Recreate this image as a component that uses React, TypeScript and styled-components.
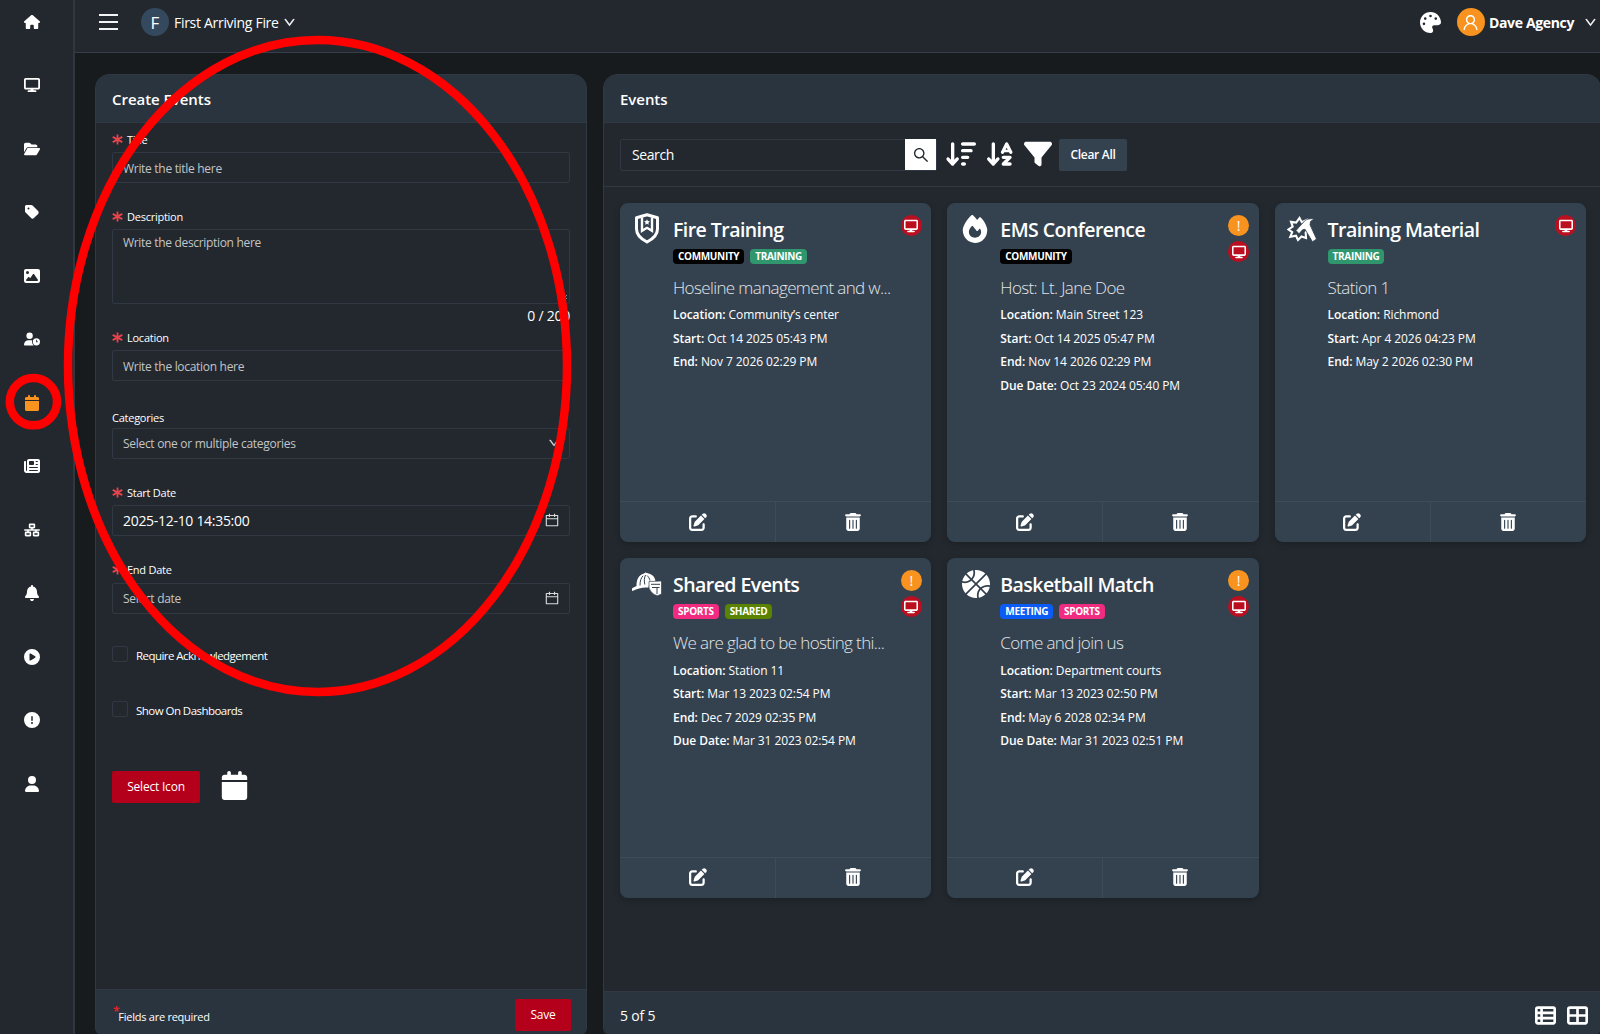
import type { ReactNode } from "react";
import styled, { createGlobalStyle } from "styled-components";
import {
  AiOutlineCalendar,
  AiOutlineDown,
  AiOutlineSearch,
  AiOutlineUser,
} from "react-icons/ai";
import {
  FaArrowDownAZ,
  FaArrowDownWideShort,
  FaBasketball,
  FaBell,
  FaCalendar,
  FaCircleExclamation,
  FaCirclePlay,
  FaDisplay,
  FaFilter,
  FaFire,
  FaFolderOpen,
  FaHouse,
  FaImage,
  FaNetworkWired,
  FaNewspaper,
  FaPalette,
  FaPenToSquare,
  FaTableCellsLarge,
  FaTableList,
  FaTag,
  FaTrashCan,
  FaUser,
  FaUserClock,
} from "react-icons/fa6";

const colors = {
  page: "#181b1e",
  surface: "#22282e",
  raised: "#2a343e",
  card: "#344250",
  border: "#303943",
  red: "#b4001a",
  orange: "#f7931e",
};

const tagColors: Record<string, string> = {
  COMMUNITY: "#000000",
  TRAINING: "#30966e",
  SPORTS: "#f02b80",
  SHARED: "#598300",
  MEETING: "#0a5cf5",
};

const BallIcon = styled(FaBasketball)`
  margin-left: 3px;
`;

type EventItem = {
  title: string;
  icon: ReactNode;
  tags: string[];
  description: string;
  details: [string, string][];
  acknowledge?: boolean;
};

const events: EventItem[] = [
  {
    title: "Fire Training",
    icon: <ShieldIcon />,
    tags: ["COMMUNITY", "TRAINING"],
    description: "Hoseline management and w...",
    details: [
      ["Location", "Community’s center"],
      ["Start", "Oct 14 2025 05:43 PM"],
      ["End", "Nov 7 2026 02:29 PM"],
    ],
  },
  {
    title: "EMS Conference",
    icon: <FaFire size={28} />,
    tags: ["COMMUNITY"],
    description: "Host: Lt. Jane Doe",
    details: [
      ["Location", "Main Street 123"],
      ["Start", "Oct 14 2025 05:47 PM"],
      ["End", "Nov 14 2026 02:29 PM"],
      ["Due Date", "Oct 23 2024 05:40 PM"],
    ],
    acknowledge: true,
  },
  {
    title: "Training Material",
    icon: <HammerIcon />,
    tags: ["TRAINING"],
    description: "Station 1",
    details: [
      ["Location", "Richmond"],
      ["Start", "Apr 4 2026 04:23 PM"],
      ["End", "May 2 2026 02:30 PM"],
    ],
  },
  {
    title: "Shared Events",
    icon: <HelmetIcon />,
    tags: ["SPORTS", "SHARED"],
    description: "We are glad to be hosting thi...",
    details: [
      ["Location", "Station 11"],
      ["Start", "Mar 13 2023 02:54 PM"],
      ["End", "Dec 7 2029 02:35 PM"],
      ["Due Date", "Mar 31 2023 02:54 PM"],
    ],
    acknowledge: true,
  },
  {
    title: "Basketball Match",
    icon: <BallIcon size={28} />,
    tags: ["MEETING", "SPORTS"],
    description: "Come and join us",
    details: [
      ["Location", "Department courts"],
      ["Start", "Mar 13 2023 02:50 PM"],
      ["End", "May 6 2028 02:34 PM"],
      ["Due Date", "Mar 31 2023 02:51 PM"],
    ],
    acknowledge: true,
  },
];

const navIcons = [
  FaHouse,
  FaDisplay,
  FaFolderOpen,
  FaTag,
  FaImage,
  FaUserClock,
  FaCalendar,
  FaNewspaper,
  FaNetworkWired,
  FaBell,
  FaCirclePlay,
  FaCircleExclamation,
  FaUser,
];

export default function App() {
  return (
    <>
      <GlobalStyle />
      <Page>
        <Sidebar>
          {navIcons.map((Icon, index) => (
            <NavItem key={index} $active={Icon === FaCalendar}>
              <Icon />
            </NavItem>
          ))}
        </Sidebar>
        <Main>
          <TopBar />
          <Content>
            <CreateEvents />
            <EventsPanel />
          </Content>
        </Main>
      </Page>
      <Markup />
    </>
  );
}

function TopBar() {
  return (
    <Header>
      <Hamburger>
        <i />
        <i />
        <i />
      </Hamburger>
      <Avatar $color="#34495e">F</Avatar>
      <AgencyName>First Arriving Fire</AgencyName>
      <Chevron size={13} />
      <Spacer />
      <FaPalette size={21} />
      <UserMenu>
        <Avatar $color={colors.orange}>
          <AiOutlineUser size={19} />
        </Avatar>
        <UserName>Dave Agency</UserName>
        <Chevron size={13} />
      </UserMenu>
    </Header>
  );
}

function CreateEvents() {
  return (
    <FormPanel>
      <PanelHeader>Create Events</PanelHeader>
      <Form>
        <Field label="Title" required>
          <Input>Write the title here</Input>
        </Field>
        <Field label="Description" required>
          <TextArea>
            Write the description here
            <ResizeHandle viewBox="0 0 8 8">
              <path d="M1 7 7 1M4 7 7 4" stroke="#8c9297" />
            </ResizeHandle>
          </TextArea>
          <Counter>0 / 200</Counter>
        </Field>
        <Field label="Location" required>
          <Input>Write the location here</Input>
        </Field>
        <Field label="Categories">
          <Input>
            Select one or multiple categories
            <Chevron size={12} />
          </Input>
        </Field>
        <Field label="Start Date" required>
          <Input $filled>
            2025-12-10 14:35:00
            <AiOutlineCalendar size={16} />
          </Input>
        </Field>
        <Field label="End Date" required>
          <Input>
            Select date
            <AiOutlineCalendar size={16} />
          </Input>
        </Field>
        <CheckRow>
          <Checkbox />
          Require Acknowledgement
        </CheckRow>
        <CheckRow>
          <Checkbox />
          Show On Dashboards
        </CheckRow>
        <IconRow>
          <PrimaryButton $width={88}>Select Icon</PrimaryButton>
          <FaCalendar size={29} />
        </IconRow>
      </Form>
      <FormFooter>
        <FooterNote>
          <sup>*</sup>Fields are required
        </FooterNote>
        <PrimaryButton $width={56}>Save</PrimaryButton>
      </FormFooter>
    </FormPanel>
  );
}

type FieldProps = {
  label: string;
  required?: boolean;
  children: ReactNode;
};

function Field({ label, required = false, children }: FieldProps) {
  return (
    <FieldBox>
      <Label $required={required}>
        {required && (
          <svg width="11" height="11" viewBox="0 0 11 11">
            <path
              d="M5.5 .4v10.2M.7 2.9l9.6 5.2M.7 8.1l9.6-5.2"
              stroke="#e8434c"
              strokeWidth="1.8"
            />
          </svg>
        )}
        {label}
      </Label>
      {children}
    </FieldBox>
  );
}

function EventsPanel() {
  return (
    <ListPanel>
      <PanelHeader>Events</PanelHeader>
      <Toolbar>
        <SearchBox>
          <span>Search</span>
          <SearchButton>
            <AiOutlineSearch size={18} />
          </SearchButton>
        </SearchBox>
        <ToolIcons>
          <FaArrowDownWideShort size={30} />
          <FaArrowDownAZ size={30} />
          <FaFilter size={28} />
        </ToolIcons>
        <ClearButton>Clear All</ClearButton>
      </Toolbar>
      <Grid>
        {events.map((event) => (
          <EventCard key={event.title} event={event} />
        ))}
      </Grid>
      <ListFooter>
        <span>5 of 5</span>
        <FaTableList size={21} />
        <FaTableCellsLarge size={21} />
      </ListFooter>
    </ListPanel>
  );
}

function EventCard({ event }: { event: EventItem }) {
  return (
    <Card>
      <CardBody>
        <CardIcon>{event.icon}</CardIcon>
        <CardText>
          <CardTitle>{event.title}</CardTitle>
          <Tags>
            {event.tags.map((tag) => (
              <Tag key={tag} $color={tagColors[tag]}>
                {tag}
              </Tag>
            ))}
          </Tags>
          <Description>{event.description}</Description>
          {event.details.map(([name, value]) => (
            <Detail key={name}>
              <b>{name}:</b> {value}
            </Detail>
          ))}
        </CardText>
        <Badges>
          {event.acknowledge && <Badge $color={colors.orange}>!</Badge>}
          <Badge $color="#bb0f20">
            <FaDisplay size={14} />
          </Badge>
        </Badges>
      </CardBody>
      <CardActions>
        <button aria-label="Edit">
          <FaPenToSquare size={18} />
        </button>
        <button aria-label="Delete">
          <FaTrashCan size={18} />
        </button>
      </CardActions>
    </Card>
  );
}

function ShieldIcon() {
  return (
    <svg width="26" height="31" viewBox="1 0 26 31" fill="none" stroke="#fff">
      <path
        d="M13 1.8 23.5 4.8V16c0 6-5 10.2-10.5 13C7.5 26.2 2.5 22 2.5 16V4.8z"
        strokeWidth="3"
        strokeLinejoin="round"
      />
      <path d="M8 4.5v13.3l5-3 5 3V4.5" strokeWidth="2.4" />
      <path
        d="m13 6.3.9 1.8 2 .2-1.5 1.4.4 2-1.8-1-1.8 1 .4-2-1.5-1.4 2-.2z"
        fill="#fff"
        stroke="none"
      />
    </svg>
  );
}

function HammerIcon() {
  return (
    <svg width="30" height="28" viewBox="0 0 30 28" fill="none">
      <path
        d="m12.5 3 2.3 4.2L19.5 5l-1 4.8 3.5 4.7-3.3 3 .3 5.5-4.5-1.5-3.5 3.5-2-4.3-5.7 1.1 1.9-4.6L1.5 14.500l4.200-2.800L4 6.800l5.200.8z"
        stroke="#fff"
        strokeWidth="2.1"
      />
      <path
        d="M9 15.500 17.500 6C20 3.800 23 3.200 27 4l-3.500 2.500-.5 3.300L29.500 24l-4 2.800L18 14.300l-2.500.5-3.500 4z"
        fill="#fff"
        stroke={colors.card}
        strokeWidth=".8"
      />
    </svg>
  );
}

function HelmetIcon() {
  return (
    <svg width="31" height="24" viewBox="1 0 31 24">
      <path
        d="M5.500 14C5.500 7 8 3 12.500 1.800L14.500.5l3 1C22 2.500 24.300 6 24.500 9.500l-6 1.500-1 4.500c-6-.5-11 1-15.800 3.500-1.500-.8-1.200-2.500.3-3.200z"
        fill="#fff"
      />
      <path
        d="M18 9.500 30.500 9v13l-4 1.700c-4-.7-7-3.700-8.500-7.700z"
        fill="#fff"
        stroke={colors.card}
        strokeWidth=".7"
      />
      <path
        d="M9 13.500c0-4.500 1-7.500 3-9.700M13.800 12.500c-.8-3.500-.5-7 .7-9.500M19 8.500c-.5-2-1.500-3.700-3-5M20 12.300h9M21 15.500h7.500M26 16v6"
        fill="none"
        stroke={colors.card}
      />
    </svg>
  );
}

// hand-drawn highlights that lie over the whole screen
function Markup() {
  return (
    <MarkupLayer viewBox="0 0 1600 1034">
      <ellipse cx="317.5" cy="366" rx="249.5" ry="326" />
      <circle cx="33.4" cy="401.7" r="23.6" />
    </MarkupLayer>
  );
}

const GlobalStyle = createGlobalStyle`
  * {
    box-sizing: border-box;
  }

  body {
    background: ${colors.page};
    color: #fff;
    font-family: "Open Sans", "Noto Sans", sans-serif;
    font-size: 12px;
    margin: 0;
    overflow: hidden;
  }

  button {
    border: 0;
    color: inherit;
    font: inherit;
    letter-spacing: inherit;
    padding: 0;
  }

  svg {
    display: block;
    flex: none;
  }
`;

const Page = styled.div`
  display: flex;
  height: 1034px;
  overflow: hidden;
  width: 1600px;
`;

const Sidebar = styled.nav`
  background: ${colors.surface};
  border-right: 2px solid #2f3741;
  flex: none;
  padding: 5.6px 10px 0 0;
  width: 75px;
`;

const NavItem = styled.div<{ $active: boolean }>`
  align-items: center;
  color: ${({ $active }) => ($active ? colors.orange : "#fff")};
  display: flex;
  font-size: 16px;
  height: 32px;
  justify-content: center;
  margin-bottom: 31.5px;
`;

const Main = styled.div`
  display: flex;
  flex: 1;
  flex-direction: column;
  min-width: 0;
`;

const Header = styled.header`
  align-items: center;
  background: ${colors.surface};
  border-bottom: 1px solid #353e4a;
  display: flex;
  flex: none;
  height: 53px;
  padding: 0 3px 8px 24px;
`;

const Hamburger = styled.div`
  display: flex;
  flex-direction: column;
  gap: 5px;
  margin-right: 23px;

  i {
    background: #f2f3f4;
    height: 2px;
    width: 19px;
  }
`;

const Chevron = styled(AiOutlineDown)`
  stroke: currentColor;
  stroke-width: 40px;
`;

const Avatar = styled.div<{ $color: string }>`
  align-items: center;
  background: ${({ $color }) => $color};
  border-radius: 50%;
  display: flex;
  font-size: 17px;
  height: 28px;
  justify-content: center;
  width: 28px;
`;

const AgencyName = styled.span`
  font-size: 14px;
  letter-spacing: -0.3px;
  margin: 0 4px 0 5px;
`;

const Spacer = styled.div`
  flex: 1;
`;

const UserMenu = styled.div`
  align-items: center;
  display: flex;
  margin-left: 16px;
`;

const UserName = styled.span`
  font-size: 14px;
  font-weight: 700;
  letter-spacing: -0.35px;
  margin: 0 10px 0 4px;
`;

const Content = styled.div`
  display: flex;
  gap: 16px;
  padding: 21px 0 0 20px;
`;

const Panel = styled.section`
  background: ${colors.surface};
  border: 1px solid ${colors.border};
  border-radius: 14px 14px 8px 8px;
  display: flex;
  flex: none;
  flex-direction: column;
  height: 962px;
  overflow: hidden;
`;

const FormPanel = styled(Panel)`
  width: 492px;
`;

const ListPanel = styled(Panel)`
  width: 998px;
`;

const PanelHeader = styled.h2`
  align-items: center;
  background: ${colors.raised};
  border-bottom: 1px solid ${colors.border};
  display: flex;
  flex: none;
  font-size: 15px;
  font-weight: 600;
  height: 48px;
  letter-spacing: -0.05px;
  margin: 0;
  padding: 0 16px;
`;

const Form = styled.div`
  flex: 1;
  padding: 5px 16px 0;
`;

const FieldBox = styled.div`
  margin-bottom: 22.4px;

  &:nth-child(2) {
    margin-bottom: 0;
  }
`;

const Label = styled.div<{ $required: boolean }>`
  align-items: center;
  display: flex;
  font-size: 11px;
  gap: 4px;
  height: 24px;
  letter-spacing: -0.25px;
  padding-bottom: ${({ $required }) => ($required ? 2 : 0)}px;
  padding-top: ${({ $required }) => ($required ? 0 : 4)}px;
`;

const Input = styled.div<{ $filled?: boolean }>`
  align-items: center;
  border: 1px solid ${colors.border};
  border-radius: 2px;
  color: ${({ $filled }) => ($filled ? "#fff" : "#c3c5c7")};
  display: flex;
  font-size: ${({ $filled }) => ($filled ? 14 : 12)}px;
  height: 31px;
  justify-content: space-between;
  letter-spacing: ${({ $filled }) => ($filled ? -0.3 : -0.3)}px;
  padding: ${({ $filled }) => ($filled ? 0 : 1)}px 9px 0 10px;

  svg {
    color: #d8dadc;
    margin-top: -2px;
  }
`;

const TextArea = styled.div`
  border: 1px solid ${colors.border};
  border-radius: 2px;
  color: #c3c5c7;
  font-size: 12px;
  height: 75px;
  letter-spacing: -0.32px;
  line-height: 18px;
  padding: 4px 10px;
  position: relative;
`;

const ResizeHandle = styled.svg`
  bottom: 1px;
  height: 8px;
  position: absolute;
  right: 1px;
  width: 8px;
`;

const Counter = styled.div`
  font-size: 14px;
  height: 22px;
  letter-spacing: -0.25px;
  line-height: 23px;
  text-align: right;
`;

const CheckRow = styled.div`
  display: flex;
  font-size: 11.5px;
  gap: 8px;
  height: 55px;
  letter-spacing: -0.54px;
  line-height: 20px;
  margin-top: 32px;

  & + & {
    margin-top: 0;
  }
`;

const Checkbox = styled.span`
  border: 1px solid ${colors.border};
  border-radius: 2px;
  height: 16px;
  width: 16px;
`;

const IconRow = styled.div`
  display: flex;
  gap: 20px;
  padding-top: 15px;
`;

const PrimaryButton = styled.button<{ $width: number }>`
  background: ${colors.red};
  border-radius: 2px;
  font-size: 12px;
  height: 32px;
  letter-spacing: -0.2px;
  width: ${({ $width }) => $width}px;
`;

const PanelFooter = styled.footer`
  align-items: center;
  background: ${colors.raised};
  border-top: 1px solid ${colors.border};
  display: flex;
  flex: none;
`;

const FormFooter = styled(PanelFooter)`
  height: 46px;
  justify-content: space-between;
  padding: 4px 15px 0 17px;
`;

const FooterNote = styled.span`
  font-size: 11px;
  letter-spacing: -0.25px;
  padding-top: 4px;

  sup {
    color: #e0202c;
    font-size: 12px;
    font-weight: 700;
    line-height: 0;
    margin-right: -1px;
  }
`;

const Toolbar = styled.div`
  align-items: center;
  border-bottom: 1px solid ${colors.border};
  display: flex;
  flex: none;
  height: 64px;
  padding: 0 16px;
`;

const SearchBox = styled.div`
  align-items: center;
  border: 1px solid ${colors.border};
  border-radius: 2px;
  display: flex;
  font-size: 14px;
  height: 32px;
  justify-content: space-between;
  letter-spacing: -0.4px;
  padding-left: 11px;
  width: 317px;
`;

const SearchButton = styled.button`
  background: #fff;
  color: #22282e;
  display: grid;
  flex: none;
  height: 31px;
  place-items: center;
  width: 31px;
`;

const ToolIcons = styled.div`
  align-items: center;
  display: flex;
  gap: 9px;
  margin: 0 7px 1px 9px;
`;

const ClearButton = styled.button`
  background: ${colors.card};
  border-radius: 2px;
  font-weight: 600;
  height: 32px;
  letter-spacing: -0.3px;
  width: 68px;
`;

const Grid = styled.div`
  align-content: start;
  display: grid;
  flex: 1;
  gap: 16px;
  grid-template-columns: repeat(3, 311.3px);
  padding: 16px;
`;

const Card = styled.article`
  background: ${colors.card};
  border-radius: 8px;
  box-shadow: 0 2px 6px rgba(0, 0, 0, 0.2);
  display: flex;
  flex-direction: column;
  height: 339.3px;
  overflow: hidden;
`;

const CardBody = styled.div`
  display: flex;
  flex: 1;
  position: relative;
`;

const CardIcon = styled.div`
  align-items: center;
  display: flex;
  height: 51px;
  justify-content: center;
  padding-left: 2px;
  width: 53px;
`;

const CardText = styled.div`
  padding-top: 12px;
`;

const CardTitle = styled.h3`
  font-size: 19.5px;
  font-weight: 600;
  letter-spacing: -0.55px;
  line-height: 30px;
  margin: 0;
`;

const Tags = styled.div`
  display: flex;
  gap: 6px;
  margin-top: 4px;
`;

const Tag = styled.span<{ $color: string }>`
  background: ${({ $color }) => $color};
  border-radius: 4px;
  font-size: 10px;
  font-weight: 700;
  letter-spacing: -0.33px;
  line-height: 15px;
  padding: 0 5px;
`;

const Description = styled.div`
  color: #e2e5e8;
  font-size: 17px;
  font-weight: 300;
  letter-spacing: -0.62px;
  line-height: 30px;
  margin: 9px 0 0.4px;
`;

const Detail = styled.div`
  font-size: 12px;
  letter-spacing: -0.07px;
  line-height: 23.4px;

  b {
    font-weight: 600;
  }
`;

const Badges = styled.div`
  display: flex;
  flex-direction: column;
  gap: 5px;
  position: absolute;
  right: 9.5px;
  top: 12px;
`;

const Badge = styled.span<{ $color: string }>`
  align-items: center;
  background: ${({ $color }) => $color};
  border-radius: 50%;
  display: flex;
  font-size: 14px;
  height: 21px;
  justify-content: center;
  width: 21px;
`;

const CardActions = styled.div`
  border-top: 1px solid #3d4c58;
  display: grid;
  grid-template-columns: 155px 1fr;
  height: 41px;
  padding-right: 1px;

  button {
    background: none;
    display: grid;
    padding-bottom: 1px;
    place-items: center;
  }

  button + button {
    border-left: 1px solid #3d4c58;
  }
`;

const ListFooter = styled(PanelFooter)`
  font-size: 14px;
  gap: 11px;
  height: 44px;
  letter-spacing: -0.2px;
  padding: 4px 12px 0 16px;

  span {
    flex: 1;
  }
`;

const MarkupLayer = styled.svg`
  fill: none;
  height: 1034px;
  left: 0;
  pointer-events: none;
  position: absolute;
  stroke: #fe0000;
  stroke-width: 8.5px;
  top: 0;
  width: 1600px;
`;
